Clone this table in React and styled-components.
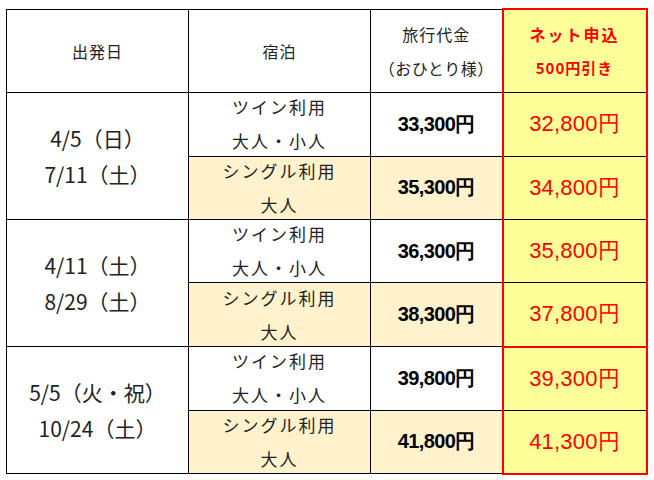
import React from "react";
import styled, { createGlobalStyle } from "styled-components";

const Global = createGlobalStyle`
  body {
    margin: 0;
    padding: 8px 0 0 6px;
    background: #fff;
    font-family: "Noto Sans CJK JP", "Noto Sans", sans-serif;
  }
`;

const groups = [
  {
    dates: ["4/5（日）", "7/11（土）"],
    rows: [
      { price: "33,300円", net: "32,800円" },
      { price: "35,300円", net: "34,800円" },
    ],
  },
  {
    dates: ["4/11（土）", "8/29（土）"],
    rows: [
      { price: "36,300円", net: "35,800円" },
      { price: "38,300円", net: "37,800円" },
    ],
  },
  {
    dates: ["5/5（火・祝）", "10/24（土）"],
    rows: [
      { price: "39,800円", net: "39,300円" },
      { price: "41,800円", net: "41,300円" },
    ],
    redTop: true,
  },
];

const rooms = [
  ["ツイン利用", "大人・小人"],
  ["シングル利用", "大人"],
];

export default function App() {
  return (
    <>
      <Global />
      <Table>
        <colgroup>
          <col style={{ width: 182 }} />
          <col style={{ width: 182 }} />
          <col style={{ width: 132 }} />
          <col style={{ width: 144 }} />
        </colgroup>
        <thead>
          <tr>
            <Head>
              <Lines $h={82}>出発日</Lines>
            </Head>
            <Head>
              <Lines $h={82}>宿泊</Lines>
            </Head>
            <Head>
              <Lines $h={82}>
                <span>旅行代金</span>
                <span className="paren">（おひとり様）</span>
              </Lines>
            </Head>
            <NetHead>
              <Lines $h={82}>
                <span>ネット申込</span>
                <span className="small">500円引き</span>
              </Lines>
            </NetHead>
          </tr>
        </thead>
        <tbody>
          {groups.map((g, gi) =>
            g.rows.map((r, ri) => (
              <tr key={gi + "-" + ri}>
                {ri === 0 && (
                  <DateCell rowSpan={2}>
                    <Lines $h={126}>
                      {g.dates.map((d) => (
                        <span key={d}>{d}</span>
                      ))}
                    </Lines>
                  </DateCell>
                )}
                <RoomCell $single={ri === 1}>
                  <Lines $h={62}>
                    <span>{rooms[ri][0]}</span>
                    <span>{rooms[ri][1]}</span>
                  </Lines>
                </RoomCell>
                <PriceCell $single={ri === 1}>
                  <Lines $h={62}>{r.price}</Lines>
                </PriceCell>
                <NetCell
                  $redTop={g.redTop && ri === 0}
                  $last={gi === groups.length - 1 && ri === 1}
                >
                  <Lines $h={62}>{r.net}</Lines>
                </NetCell>
              </tr>
            ))
          )}
        </tbody>
      </Table>
    </>
  );
}

const Table = styled.table`
  border-collapse: collapse;
  table-layout: fixed;
  width: 640px;
  td,
  th {
    border: 1px solid #000;
    padding: 0;
    text-align: center;
    vertical-align: middle;
  }
`;

const Lines = styled.div`
  height: ${(p) => p.$h}px;
  display: flex;
  flex-direction: column;
  align-items: center;
  justify-content: center;
  white-space: nowrap;
`;

const Head = styled.th`
  font-weight: 400;
  font-size: 16px;
  letter-spacing: 1px;
  color: #222;
  span {
    line-height: 34px;
  }
  .paren {
    letter-spacing: 0.5px;
  }
`;

const NetHead = styled.th`
  background: #ffff99;
  color: #ff0000;
  font-weight: 700;
  font-size: 16px;
  letter-spacing: 2px;
  border: 2px solid #ff0000 !important;
  border-bottom: 1px solid #000 !important;
  span {
    line-height: 33px;
  }
  .small {
    font-size: 15px;
    letter-spacing: 1px;
  }
`;

const DateCell = styled.td`
  font-size: 21px;
  color: #222;
  span {
    line-height: 36px;
  }
`;

const RoomCell = styled.td`
  background: ${(p) => (p.$single ? "#fff2cc" : "#fff")};
  font-size: 17px;
  letter-spacing: 2px;
  color: #222;
  span {
    line-height: 34px;
  }
`;

const PriceCell = styled.td`
  background: ${(p) => (p.$single ? "#fff2cc" : "#fff")};
  font-family: "Liberation Sans", Arial, sans-serif;
  font-weight: 700;
  font-size: 20px;
  letter-spacing: -0.6px;
  color: #000;
`;

const NetCell = styled.td`
  background: #ffff99;
  font-family: "Liberation Sans", Arial, sans-serif;
  font-size: 22px;
  letter-spacing: 0.2px;
  color: #ff0000;
  border-left: 2px solid #ff0000 !important;
  border-right: 2px solid #ff0000 !important;
  ${(p) => p.$redTop && "border-top: 2px solid #ff0000 !important;"}
  ${(p) => p.$last && "border-bottom: 2px solid #ff0000 !important;"}
`;
